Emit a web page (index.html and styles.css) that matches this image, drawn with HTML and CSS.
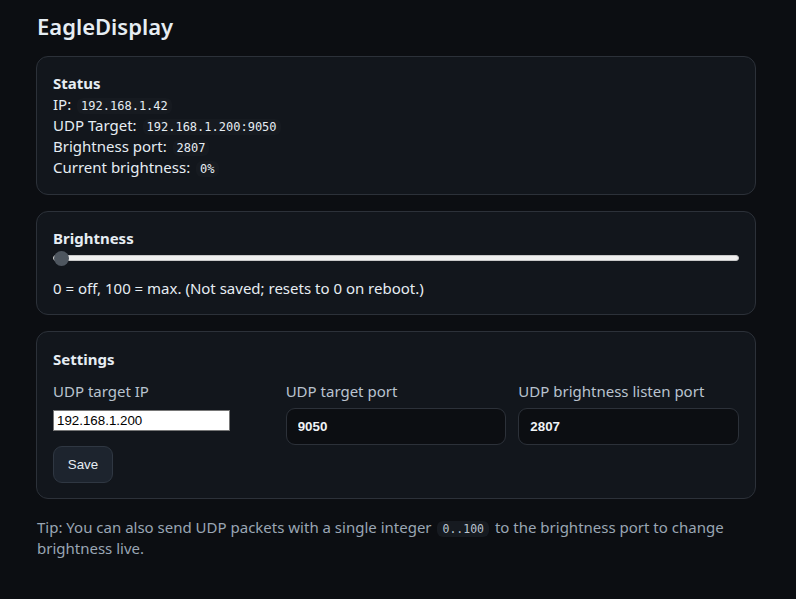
FILE: index.html
```html
<!DOCTYPE html>
<html lang="en">
<head>
<meta charset="utf-8">
<title>EagleDisplay</title>
<link rel="stylesheet" href="styles.css">
</head>
<body>
<main class="wrap">
  <h1 class="title">EagleDisplay</h1>

  <section class="card status">
    <div class="card-title">Status</div>
    <div class="row">IP: <code>192.168.1.42</code></div>
    <div class="row">UDP Target: <code>192.168.1.200:9050</code></div>
    <div class="row">Brightness port: <code>2807</code></div>
    <div class="row">Current brightness: <code>0%</code></div>
  </section>

  <section class="card">
    <div class="card-title">Brightness</div>
    <input class="slider" type="range" min="0" max="100" value="0">
    <p class="hint">0 = off, 100 = max. (Not saved; resets to 0 on reboot.)</p>
  </section>

  <section class="card settings">
    <div class="card-title">Settings</div>
    <div class="grid">
      <div class="field">
        <label class="label">UDP target IP</label>
        <input class="plain" type="text" value="192.168.1.200">
      </div>
      <div class="field">
        <label class="label">UDP target port</label>
        <input class="input" type="text" value="9050">
      </div>
      <div class="field">
        <label class="label">UDP brightness listen port</label>
        <input class="input" type="text" value="2807">
      </div>
    </div>
    <button class="btn">Save</button>
  </section>

  <p class="tip"><span>Tip: You can also send UDP packets with a single integer</span> <code>0..100</code> <span>to the brightness port to change</span> <span>brightness live.</span></p>
</main>
</body>
</html>
```

FILE: styles.css
```css
html, body {
  margin: 0;
  padding: 0;
  background: #0c0e12;
}
body {
  font-family: "Noto Sans", "Open Sans", sans-serif;
  color: #e6edf3;
  font-size: 15px;
}
.wrap {
  width: 720px;
  margin-left: 36px;
  padding-top: 8px;
}
.title {
  font-size: 22px;
  font-weight: 600;
  margin: 0 0 12px 1px;
  line-height: 36px;
  color: #e6edf3;
}
.card {
  background: #12161c;
  border: 1px solid #2c3139;
  border-radius: 12px;
  padding: 16px 16px 15px 16px;
  margin-bottom: 16px;
}
.card.status {
  padding-bottom: 16px;
}
.card-title {
  font-weight: 700;
  font-size: 15px;
  line-height: 21px;
}
.row {
  line-height: 21px;
}
code {
  display: inline-block;
  font-family: "DejaVu Sans Mono", monospace;
  font-size: 12px;
  line-height: 16px;
  background: #161a20;
  padding: 0 4px;
  border-radius: 6px;
  margin-left: 2px;
}
.slider {
  -webkit-appearance: none;
  appearance: none;
  display: block;
  width: 686px;
  height: 16px;
  margin: 1px 0 0 0;
  background: transparent;
}
.slider::-webkit-slider-runnable-track {
  height: 6px;
  background: #efefef;
  border-radius: 3px;
  border: 1px solid #c8c8c8;
  box-sizing: border-box;
}
.slider::-webkit-slider-thumb {
  -webkit-appearance: none;
  width: 15px;
  height: 15px;
  border-radius: 50%;
  background: #4e565f;
  margin-top: -5px;
}
.hint {
  margin: 12px 0 0 0;
  line-height: 21px;
  color: #e6edf3;
}
.settings {
  padding-top: 17px;
  padding-bottom: 15px;
}
.settings .card-title {
  margin-bottom: 11px;
}
.grid {
  display: grid;
  grid-template-columns: 1fr 1fr 1fr;
  column-gap: 12px;
}
.field {
  display: flex;
  flex-direction: column;
  align-items: flex-start;
}
.label {
  color: #b9c3cf;
  font-size: 15px;
  line-height: 21px;
  margin-bottom: 6px;
}
.plain {
  font-family: "Liberation Sans", Arial, sans-serif;
  font-size: 13.33px;
  width: 177px;
  box-sizing: border-box;
  height: 21px;
  padding: 1px 3px;
  border: 1px solid #767676;
  background: #fff;
  color: #000;
  margin-top: 2px;
}
.input {
  font-family: "Liberation Sans", Arial, sans-serif;
  font-size: 13.33px;
  font-weight: 600;
  width: 100%;
  box-sizing: border-box;
  height: 37px;
  padding: 0 11px;
  background: #0c0e12;
  border: 1px solid #2c3139;
  border-radius: 9px;
  color: #f0f3f6;
  margin: 0;
}
.btn {
  display: block;
  margin-top: 1px;
  font-family: "Liberation Sans", Arial, sans-serif;
  font-size: 13.33px;
  color: #e6edf3;
  background: #1d242e;
  border: 1px solid #2f3742;
  border-radius: 9px;
  width: 60px;
  height: 37px;
}
.tip {
  margin: 18px 0 0 1px;
  color: #9aa6b4;
  line-height: 21px;
}
.tip code {
  font-size: 11.5px;
  color: #b9c3cf;
  margin: 0 2px;
  padding: 0 5px;
}
```
